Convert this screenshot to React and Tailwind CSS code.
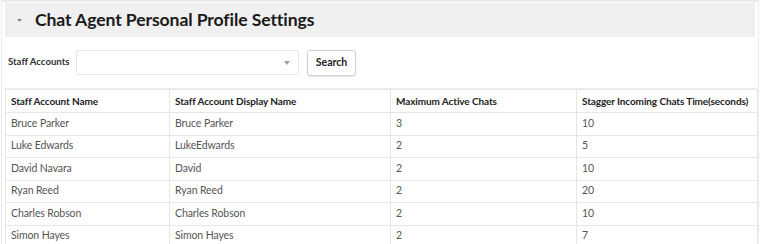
import React from 'react';

const rows = [
  ['Bruce Parker', 'Bruce Parker', '3', '10'],
  ['Luke Edwards', 'LukeEdwards', '2', '5'],
  ['David Navara', 'David', '2', '10'],
  ['Ryan Reed', 'Ryan Reed', '2', '20'],
  ['Charles Robson', 'Charles Robson', '2', '10'],
  ['Simon Hayes', 'Simon Hayes', '2', '7'],
];

const headers = [
  'Staff Account Name',
  'Staff Account Display Name',
  'Maximum Active Chats',
  'Stagger Incoming Chats Time(seconds)',
];

const App = () => {
  return (
    <div className="w-[760px] h-[244px] overflow-hidden bg-white font-['Lato',sans-serif]">
      <div className="h-full border-l border-r border-t-2 border-[#ececec] ml-px mr-[1px]">
        <div className="mx-[3px] mt-[1px] h-[34px] bg-[#f0f0f0] flex items-center">
          <span className="ml-[11px] w-[6px] flex items-center justify-center">
            <svg width="5" height="3" viewBox="0 0 5 3">
              <path d="M0 0 L5 0 L2.5 3 Z" fill="#8a8a8a" />
            </svg>
          </span>
          <h1 className="ml-[13px] text-[17.6px] font-bold text-[#1a1a1a] tracking-[-0.1px]">
            Chat Agent Personal Profile Settings
          </h1>
        </div>

        <div className="flex items-center h-[52px] pl-[5px] border-b border-[#ececec] mx-[1px]">
          <label className="text-[9.6px] font-bold text-[#333] w-[68px]">Staff Accounts</label>
          <div className="w-[223px] h-[25px] border border-[#e6e6e6] rounded-[2px] flex items-center justify-end pr-[8px]">
            <svg width="6" height="4" viewBox="0 0 6 4">
              <path d="M0 0 L6 0 L3 4 Z" fill="#a0a0a0" />
            </svg>
          </div>
          <button className="ml-[8px] w-[49px] h-[26px] border border-[#cfcfcf] rounded-[3px] bg-white text-[10.5px] font-bold text-[#222] shadow-[0_1px_1px_rgba(0,0,0,0.08)]">
            Search
          </button>
        </div>

        <table className="ml-[3px] w-[752px] border-collapse table-fixed text-[10.5px] tracking-[-0.1px]">
          <colgroup>
            <col className="w-[164px]" />
            <col className="w-[221px]" />
            <col className="w-[186px]" />
            <col className="w-[181px]" />
          </colgroup>
          <thead>
            <tr className="h-[23px]">
              {headers.map((h) => (
                <th key={h} className="border border-[#e6e6e6] px-[5px] text-left text-[10px] font-bold text-[#222] whitespace-nowrap">
                  {h}
                </th>
              ))}
            </tr>
          </thead>
          <tbody>
            {rows.map((r, i) => (
              <tr key={i} className="h-[22.5px]">
                {r.map((c, j) => (
                  <td key={j} className="border border-[#e6e6e6] px-[5px] text-[#555] whitespace-nowrap">
                    {c}
                  </td>
                ))}
              </tr>
            ))}
          </tbody>
        </table>
      </div>
    </div>
  );
};

export default App;
